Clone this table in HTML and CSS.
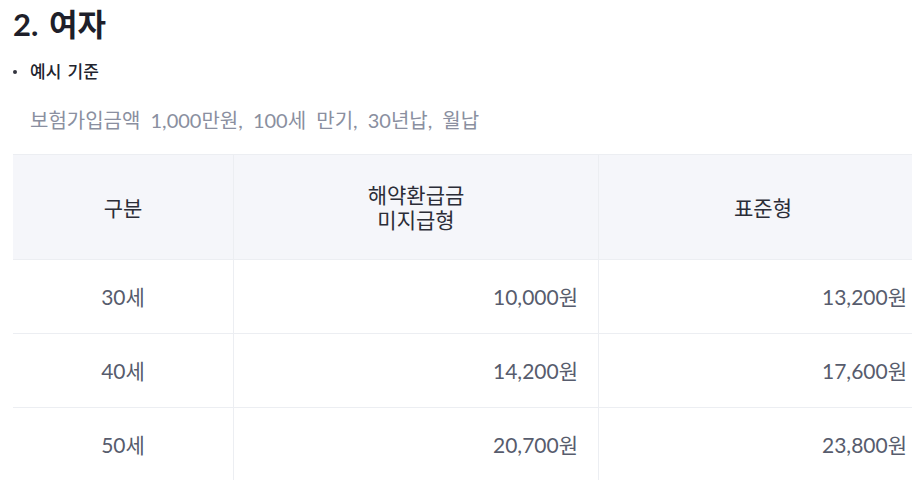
FILE: index.html
```html
<!DOCTYPE html>
<html lang="ko">
<head>
  <meta charset="UTF-8">
  <meta name="viewport" content="width=device-width, initial-scale=1.0">
  <title>보험료 예시 - 여자</title>
  <link rel="stylesheet" href="styles.css">
</head>
<body>
  <h2 class="title">2. 여자</h2>

  <ul class="bullets">
    <li><span class="dot"></span>예시 기준</li>
  </ul>
  <p class="note">보험가입금액 1,000만원, 100세 만기, 30년납, 월납</p>

  <table class="premium">
    <thead>
      <tr>
        <th class="col-age">구분</th>
        <th class="col-a">해약환급금<br>미지급형</th>
        <th class="col-b">표준형</th>
      </tr>
    </thead>
    <tbody>
      <tr>
        <td class="age">30세</td>
        <td class="num">10,000원</td>
        <td class="num">13,200원</td>
      </tr>
      <tr>
        <td class="age">40세</td>
        <td class="num">14,200원</td>
        <td class="num">17,600원</td>
      </tr>
      <tr>
        <td class="age">50세</td>
        <td class="num">20,700원</td>
        <td class="num">23,800원</td>
      </tr>
    </tbody>
  </table>
</body>
</html>
```

FILE: styles.css
```css
html, body {
  overflow: hidden;
}
body {
  font-family: Lato, "Noto Sans CJK KR", sans-serif;
  margin: 0;
  padding: 6px 0 0 13px;
  color: #1c1d26;
  background: #fff;
}
.title {
  margin: 0;
  font-size: 31px;
  line-height: 36px;
  font-weight: 700;
  word-spacing: 3px;
  color: #1e1f2a;
}
.bullets {
  list-style: none;
  margin: 18px 0 0;
  padding: 0;
}
.bullets li {
  display: flex;
  align-items: center;
  font-size: 17px;
  line-height: 24px;
  font-weight: 500;
  word-spacing: 2px;
  color: #22242e;
}
.dot {
  width: 4px;
  height: 4px;
  border-radius: 50%;
  background: #33353f;
  margin: 0 13px 0 0;
}
.note {
  margin: 23px 0 0 17px;
  font-size: 20px;
  line-height: 26px;
  word-spacing: 5px;
  color: #8a8fa0;
}
.premium {
  margin-top: 21px;
  width: 915px;
  border-collapse: collapse;
  table-layout: fixed;
}
.premium th,
.premium td {
  border: 1px solid #eceef2;
  font-size: 21px;
  line-height: 25px;
}
.premium tr > :first-child {
  border-left: none;
}
.premium th {
  height: 104px;
  background: #f5f6fa;
  font-weight: 400;
  color: #2b2d37;
  padding: 0 20px;
}
.premium td {
  height: 73px;
  padding: 0 20px;
  color: #575c6d;
}
.col-age {
  width: 180px;
}
.col-a {
  width: 324px;
}
.premium td.age {
  text-align: center;
}
.premium td.num {
  text-align: right;
}
```
